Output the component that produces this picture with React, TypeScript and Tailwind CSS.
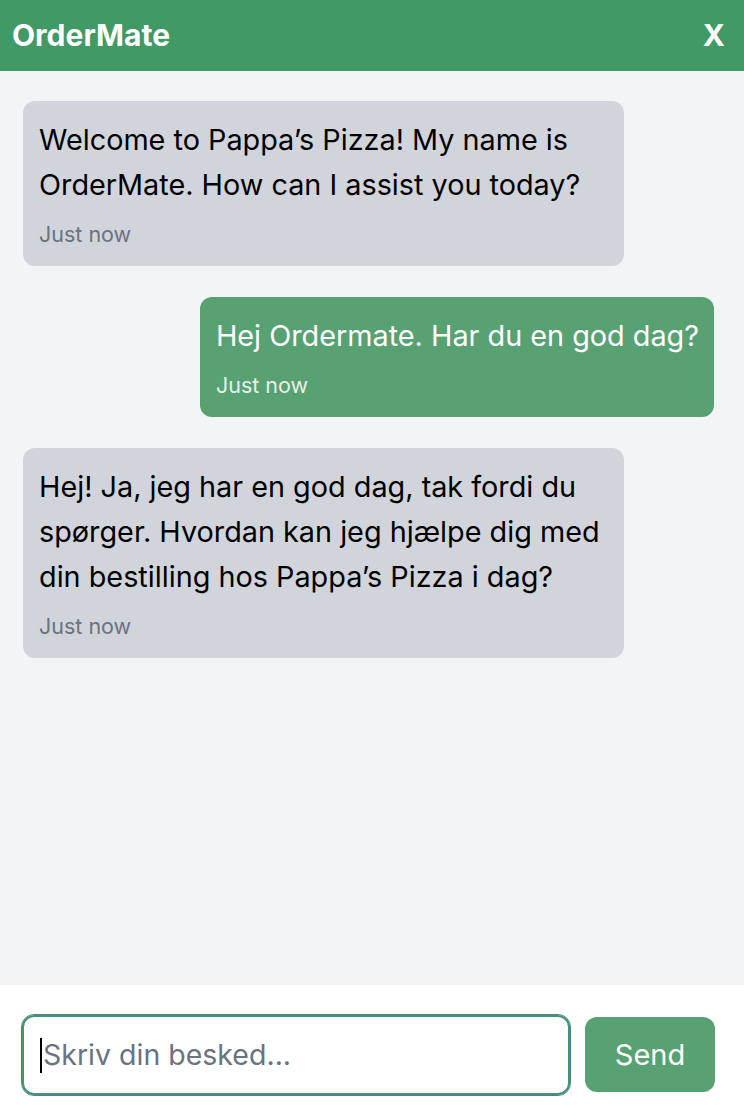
import React from "react";

const font = { fontFamily: "Inter, 'Noto Sans', sans-serif" };

function Bubble({ text, user }: { text: string[]; user?: boolean }) {
  return (
    <div className={user ? "flex justify-end" : "flex justify-start"}>
      <div
        className={
          user
            ? "rounded-xl bg-[#57a173] text-white pl-4 pr-[15px] pt-[16px] pb-[17px]"
            : "w-[601px] rounded-xl bg-[#d1d5db] text-black px-4 pt-[16px] pb-[17px]"
        }
      >
        <div className="text-[28.8px] leading-[45px]">
          {text.map((t, i) => (
            <div key={i} className="whitespace-nowrap">{t}</div>
          ))}
        </div>
        <div
          className={
            user
              ? "mt-[12px] text-[21.5px] leading-[30px] text-[#e8efe9]"
              : "mt-[12px] text-[21.5px] leading-[30px] text-[#6b7280]"
          }
        >
          Just now
        </div>
      </div>
    </div>
  );
}

export default function App() {
  return (
    <div className="flex h-[1118px] w-[744px] flex-col bg-white" style={font}>
      <div className="flex h-[71px] shrink-0 items-center justify-between bg-[#419966] pl-3 pr-[19px] text-white">
        <div className="text-[30px] font-bold">OrderMate</div>
        <div className="text-[30px] font-bold">X</div>
      </div>
      <div className="flex flex-1 flex-col gap-[31px] bg-[#f3f4f6] pl-[23px] pr-[30px] pt-[30px]">
        <Bubble text={["Welcome to Pappa’s Pizza! My name is", "OrderMate. How can I assist you today?"]} />
        <Bubble user text={["Hej Ordermate. Har du en god dag?"]} />
        <Bubble
          text={[
            "Hej! Ja, jeg har en god dag, tak fordi du",
            "spørger. Hvordan kan jeg hjælpe dig med",
            "din bestilling hos Pappa’s Pizza i dag?",
          ]}
        />
      </div>
      <div className="flex h-[133px] shrink-0 items-start gap-[15px] bg-white pl-[22px] pr-[29px] pt-[30px]">
        <div className="flex h-[80px] w-[548px] items-center rounded-xl border-2 border-[#45956c] bg-white pl-[16px] outline outline-1 outline-[#4f7f9f]">
          <span className="mr-[1px] inline-block h-[35px] w-[2px] bg-black" />
          <span className="text-[28.5px] text-[#6b7280]">Skriv din besked...</span>
        </div>
        <button className="mt-[2px] flex h-[75px] w-[130px] items-center justify-center rounded-xl bg-[#57a173] text-[29px] text-white">
          Send
        </button>
      </div>
    </div>
  );
}
